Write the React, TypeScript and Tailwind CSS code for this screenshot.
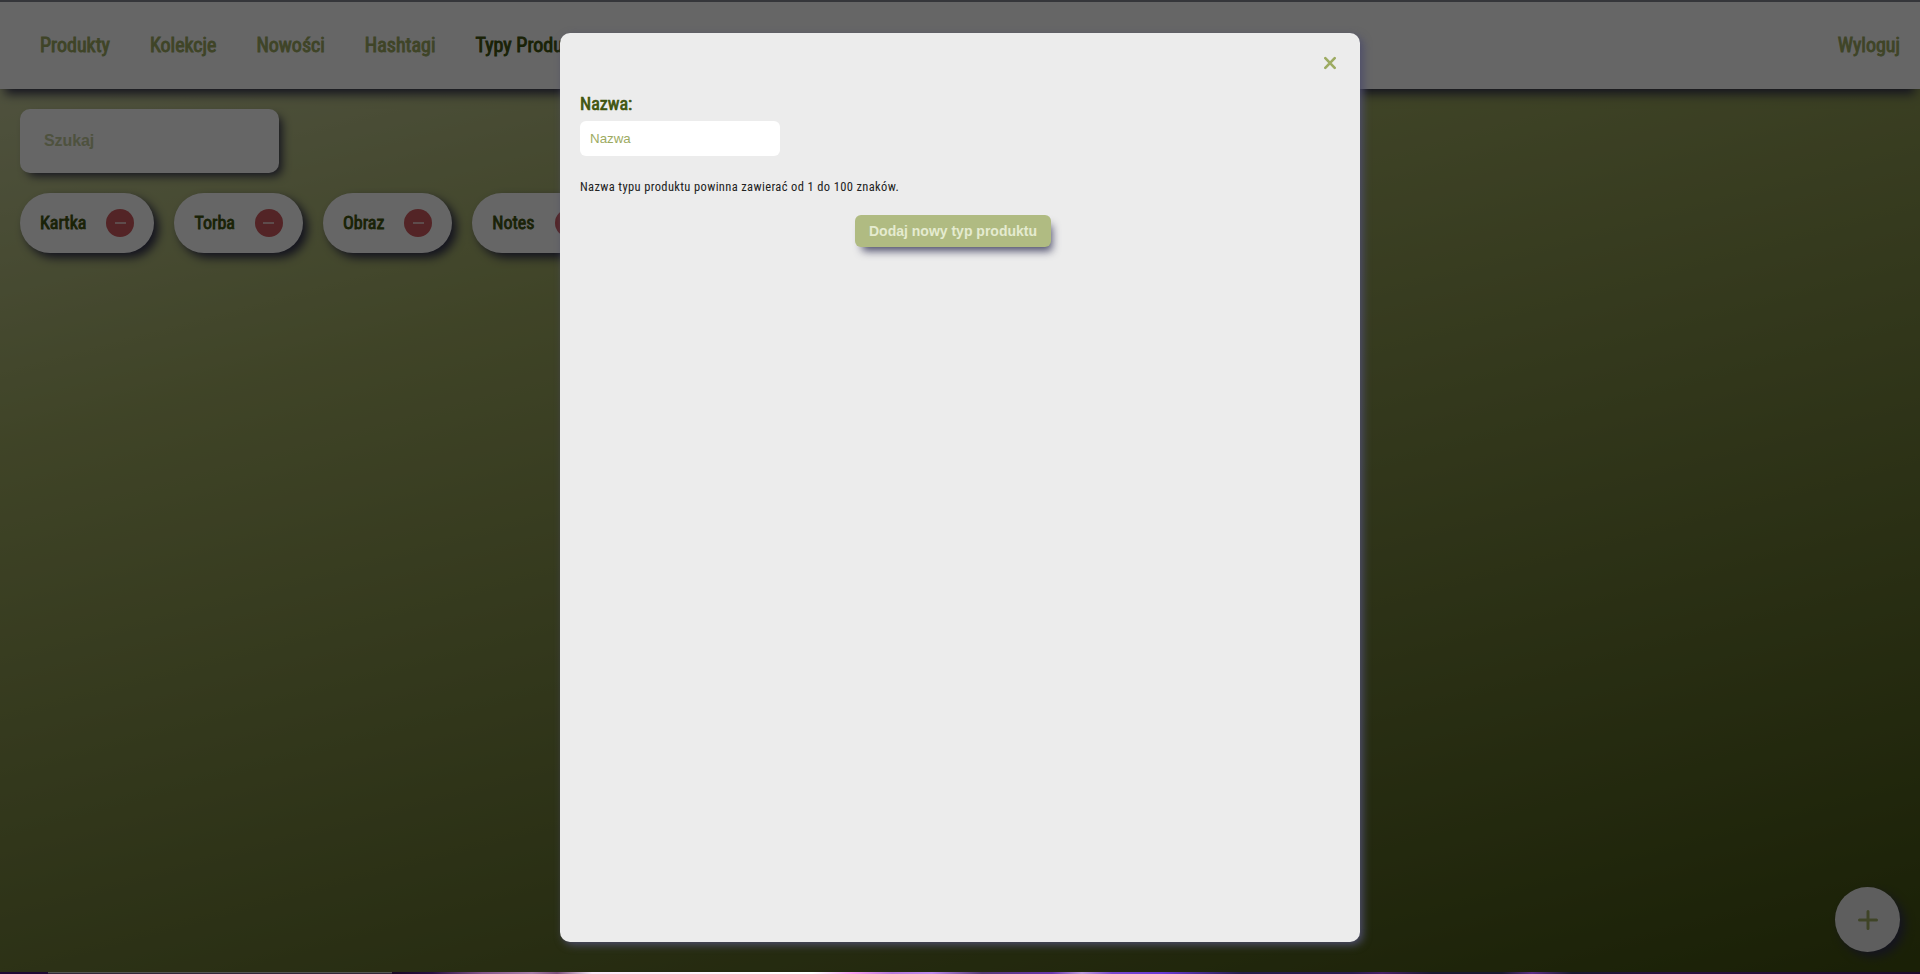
const nav = ['Produkty', 'Kolekcje', 'Nowości', 'Hashtagi'];
const types = ['Kartka', 'Torba', 'Obraz', 'Notes'];

export default function App() {
  return (
    <div className="relative flex h-[974px] w-full flex-col overflow-hidden font-['Roboto',sans-serif] [font-stretch:75%]">
      <div className="h-[2px] shrink-0 bg-[#35363a]" />
      <div className="relative h-[970px] shrink-0 overflow-hidden bg-[linear-gradient(165deg,#ced3a8_0%,#9faa62_30%,#415010_100%)]">
        <header className="flex h-[87px] items-center justify-between bg-white px-5 pb-[2px] text-[20px] text-[#9dab62] shadow-[0_10px_10px_-5px_#33334d] [-webkit-text-stroke:0.9px]">
          <nav className="flex gap-10 pl-5">
            {nav.map((n) => (
              <a key={n}>{n}</a>
            ))}
            <a className="text-[#415510]">Typy Produktów</a>
          </nav>
          <a>Wyloguj</a>
        </header>
        <main className="flex flex-col items-start gap-5 p-5">
          <input
            className="h-16 w-[259px] rounded-[10px] bg-white px-6 font-['Liberation_Sans',sans-serif] text-[16px] font-bold tracking-[-0.1px] shadow-[5px_5px_10px_-2px_#33334d] placeholder:text-[#c4cc9c]"
            placeholder="Szukaj"
          />
          <div className="flex gap-5">
            {types.map((t) => (
              <div
                key={t}
                className="flex h-[60px] items-center gap-5 rounded-[30px] bg-white px-5 text-[18px] text-[#415510] shadow-[5px_5px_10px_#33334d]"
              >
                <span className="pb-px [-webkit-text-stroke:0.8px]">{t}</span>
                <button className="flex size-7 items-center justify-center rounded-full bg-[#d05a5f]">
                  <span className="h-[2px] w-[11px] bg-white/60" />
                </button>
              </div>
            ))}
          </div>
        </main>
        <button className="absolute right-5 bottom-[20px] flex size-[65px] items-center justify-center rounded-full bg-[#ececec] text-[#9dab62] shadow-[5px_5px_10px_#33334d]">
          <svg width="20" height="20" viewBox="0 0 20 20" fill="none" stroke="currentColor" strokeWidth="3" strokeLinecap="round">
            <path d="M10 1.5v17M1.5 10h17" />
          </svg>
        </button>
        <div className="absolute inset-0 flex items-start justify-center bg-black/60 pt-[31px]">
          <section className="flex h-[909px] w-[800px] flex-col rounded-[10px] bg-[#ececec] px-5 shadow-[3px_3px_9px_#4d4d6b]">
            <div className="flex h-[60px] items-center justify-end pr-[4px]">
              <button className="text-[#9dab62]">
                <svg width="12" height="14" viewBox="0 0 12 14" fill="none" stroke="currentColor" strokeWidth="2.6" strokeLinecap="round">
                  <path d="M1.3 2.1l9.4 9.8M10.7 2.1l-9.4 9.8" />
                </svg>
              </button>
            </div>
            <label className="h-7 text-[18px] leading-[21px] text-[#415510] [-webkit-text-stroke:0.7px]">Nazwa:</label>
            <input
              className="h-[35px] w-[200px] rounded-[6px] bg-white px-[10px] font-['Liberation_Sans',sans-serif] text-[13.33px] placeholder:text-[#9dab62]"
              placeholder="Nazwa"
            />
            <p className="mt-[22px] text-[12.5px] leading-[18px] tracking-[0.36px] text-[#222222]">
              Nazwa typu produktu powinna zawierać od 1 do 100 znaków.
            </p>
            <button className="mt-[19px] ml-[275px] h-8 w-[196px] rounded-[6px] bg-[#b0bb82] font-['Liberation_Sans',sans-serif] text-[14px] font-bold text-[#e5ebd0] shadow-[4px_7px_8px_-3px_#4d4d6b]">
              Dodaj nowy typ produktu
            </button>
          </section>
        </div>
      </div>
      <div className="flex h-[2px] shrink-0">
        <div className="w-12 bg-[#200a35]" />
        <div className="w-[344px] border-t border-[#555555] bg-[#33283a]" />
        <div className="grow bg-[linear-gradient(90deg,#1b0826_0,#2a0f44_40px,#85558c_90px,#ab7fad_140px,#7f5080_165px,#fbe4f8_200px,#ffffff_420px,#ff9ff5_460px,#b678dd_500px,#c08af0_540px,#56397a_590px,#6a35b0_660px,#c09ae0_690px,#7a48d0_720px,#6a3ad8_770px,#251c4a_850px,#2a1a50_960px,#48206a_990px,#1a1830_1040px,#1a1830_1110px,#5c2f88_1140px,#1a1830_1180px,#2a1040_1280px,#1e0a2c_1528px)]" />
      </div>
    </div>
  );
}
